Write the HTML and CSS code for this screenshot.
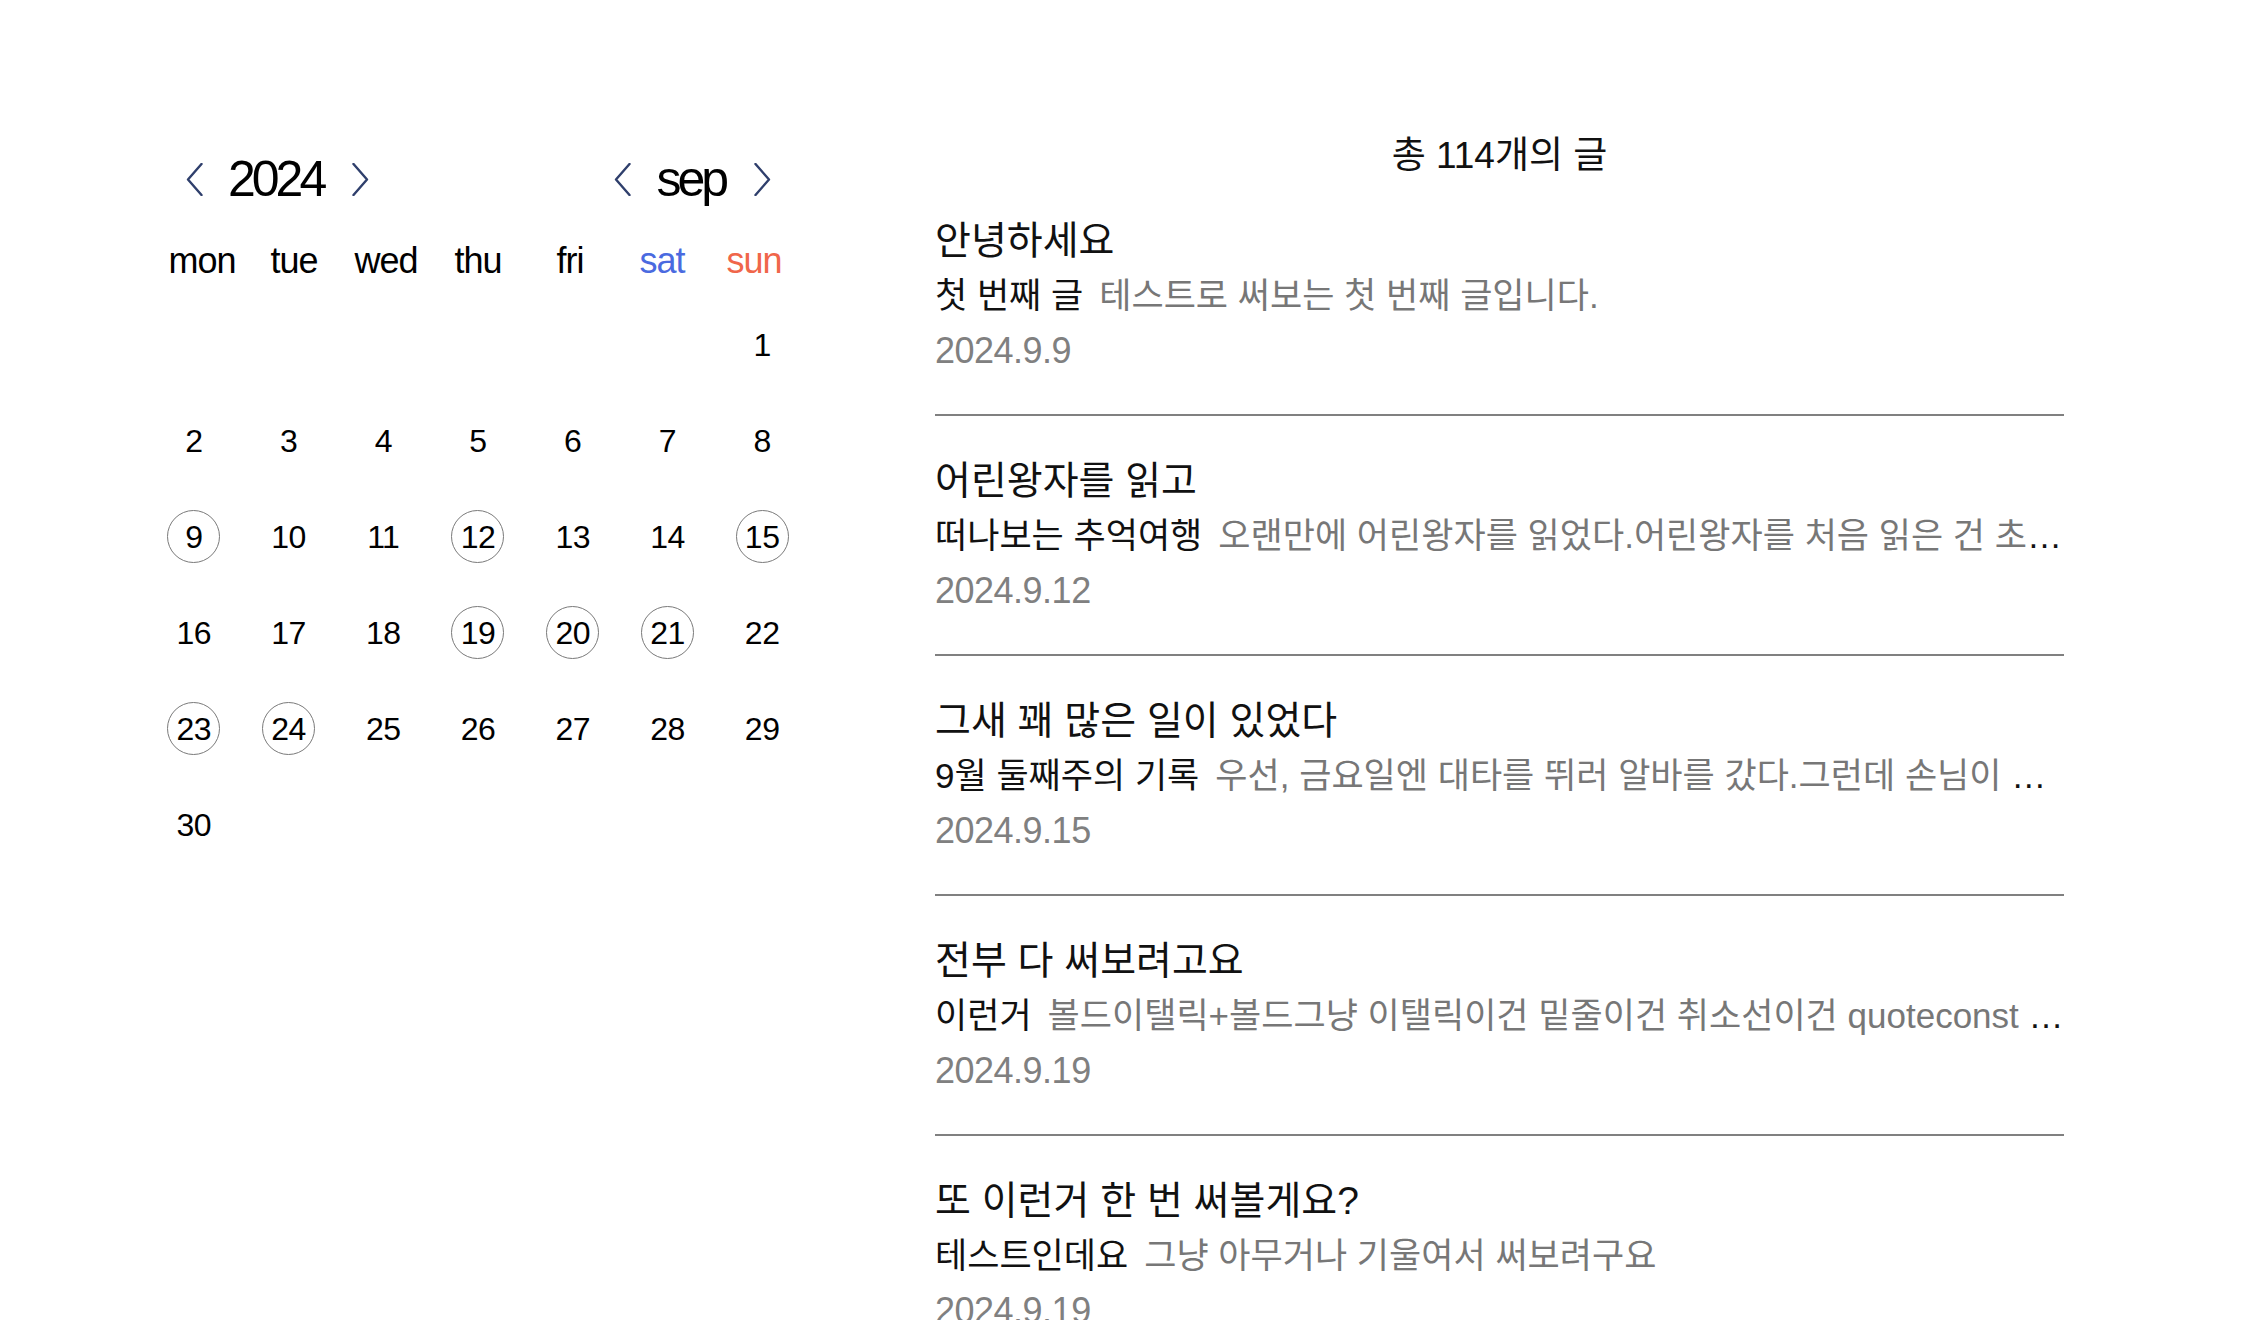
FILE: index.html
```html
<!DOCTYPE html>
<html lang="ko">
<head>
<meta charset="utf-8">
<title>calendar</title>
<link rel="stylesheet" href="styles.css">
</head>
<body>
<main class="page">
  <section class="calendar">
    <div class="cal-head">
      <div class="picker">
        <svg class="chev" viewBox="0 0 17 33" width="17" height="33"><polyline points="15.5,1 2,16.5 15.5,32"/></svg>
        <span class="picker-label">2024</span>
        <svg class="chev" viewBox="0 0 17 33" width="17" height="33"><polyline points="1.5,1 15,16.5 1.5,32"/></svg>
      </div>
      <div class="picker">
        <svg class="chev" viewBox="0 0 17 33" width="17" height="33"><polyline points="15.5,1 2,16.5 15.5,32"/></svg>
        <span class="picker-label">sep</span>
        <svg class="chev" viewBox="0 0 17 33" width="17" height="33"><polyline points="1.5,1 15,16.5 1.5,32"/></svg>
      </div>
    </div>
    <div class="weekdays">
      <span>mon</span><span>tue</span><span>wed</span><span>thu</span><span>fri</span><span class="sat">sat</span><span class="sun">sun</span>
    </div>
    <div class="days">
      <span class="day"></span><span class="day"></span><span class="day"></span><span class="day"></span><span class="day"></span><span class="day"></span><span class="day"><b>1</b></span>
      <span class="day"><b>2</b></span><span class="day"><b>3</b></span><span class="day"><b>4</b></span><span class="day"><b>5</b></span><span class="day"><b>6</b></span><span class="day"><b>7</b></span><span class="day"><b>8</b></span>
      <span class="day"><b class="mark">9</b></span><span class="day"><b>10</b></span><span class="day"><b>11</b></span><span class="day"><b class="mark">12</b></span><span class="day"><b>13</b></span><span class="day"><b>14</b></span><span class="day"><b class="mark">15</b></span>
      <span class="day"><b>16</b></span><span class="day"><b>17</b></span><span class="day"><b>18</b></span><span class="day"><b class="mark">19</b></span><span class="day"><b class="mark">20</b></span><span class="day"><b class="mark">21</b></span><span class="day"><b>22</b></span>
      <span class="day"><b class="mark">23</b></span><span class="day"><b class="mark">24</b></span><span class="day"><b>25</b></span><span class="day"><b>26</b></span><span class="day"><b>27</b></span><span class="day"><b>28</b></span><span class="day"><b>29</b></span>
      <span class="day"><b>30</b></span>
    </div>
  </section>

  <section class="posts">
    <h2 class="count">총 114개의 글</h2>
    <ul class="post-list">
      <li class="post">
        <p class="post-title">안녕하세요</p>
        <p class="post-line"><span class="post-sub">첫 번째 글</span><span class="post-excerpt">테스트로 써보는 첫 번째 글입니다.</span></p>
        <p class="post-date">2024.9.9</p>
      </li>
      <li class="post">
        <p class="post-title">어린왕자를 읽고</p>
        <p class="post-line"><span class="post-sub">떠나보는 추억여행</span><span class="post-excerpt">오랜만에 어린왕자를 읽었다.어린왕자를 처음 읽은 건 초등학교 때였던 것 같다.</span></p>
        <p class="post-date">2024.9.12</p>
      </li>
      <li class="post">
        <p class="post-title">그새 꽤 많은 일이 있었다</p>
        <p class="post-line"><span class="post-sub">9월 둘째주의 기록</span><span class="post-excerpt">우선, 금요일엔 대타를 뛰러 알바를 갔다.그런데 손님이 정말 많았다.</span></p>
        <p class="post-date">2024.9.15</p>
      </li>
      <li class="post">
        <p class="post-title">전부 다 써보려고요</p>
        <p class="post-line"><span class="post-sub">이런거</span><span class="post-excerpt">볼드이탤릭+볼드그냥 이탤릭이건 밑줄이건 취소선이건 quoteconst a = 1;</span></p>
        <p class="post-date">2024.9.19</p>
      </li>
      <li class="post">
        <p class="post-title">또 이런거 한 번 써볼게요?</p>
        <p class="post-line"><span class="post-sub">테스트인데요</span><span class="post-excerpt">그냥 아무거나 기울여서 써보려구요</span></p>
        <p class="post-date">2024.9.19</p>
      </li>
    </ul>
  </section>
</main>
</body>
</html>
```

FILE: styles.css
```css
* { box-sizing: border-box; }

html, body {
  margin: 0;
  padding: 0;
  background: #ffffff;
}

body {
  font-family: "Liberation Sans", "Noto Sans CJK KR", sans-serif;
  color: #111111;
  overflow: hidden;
}

.page {
  display: flex;
  align-items: flex-start;
}

/* ---------- calendar ---------- */
.calendar {
  width: 664px;
  margin-left: 146px;
  padding-top: 149px;
}

.cal-head {
  display: flex;
  justify-content: space-between;
  align-items: center;
  height: 60px;
  padding: 0 39px 0 40px;
}

.picker {
  display: flex;
  align-items: center;
  gap: 25px;
}

.picker-label {
  font-size: 50px;
  line-height: 60px;
  letter-spacing: -4px;
  color: #000;
  margin-right: 4px;
}

.chev {
  display: block;
  fill: none;
  stroke: #2f3f6c;
  stroke-width: 2.4;
  stroke-linecap: round;
  stroke-linejoin: round;
}

.weekdays {
  width: 644px;
  margin: 27px auto 0;
  display: grid;
  grid-template-columns: repeat(7, 1fr);
  font-size: 36px;
  line-height: 50px;
  letter-spacing: -1px;
  color: #000;
  text-align: center;
}

.weekdays .sat { color: #4a6ae0; }
.weekdays .sun { color: #f0664a; }

.days {
  width: 663px;
  margin: 10px auto 0;
  display: grid;
  grid-template-columns: repeat(7, 1fr);
  grid-auto-rows: 96px;
}

.day {
  display: flex;
  align-items: center;
  justify-content: center;
}

.day b {
  font-weight: 400;
  font-size: 32px;
  line-height: 55px;
  width: 53px;
  height: 53px;
  text-align: center;
  color: #000;
  letter-spacing: -0.5px;
}

.day b.mark {
  border: 1.5px solid #7a7a7a;
  border-radius: 50%;
  line-height: 52px;
}

/* ---------- posts ---------- */
.posts {
  width: 1129px;
  margin-left: 125px;
  padding-top: 136px;
}

.count {
  margin: 0;
  font-size: 37px;
  font-weight: 400;
  line-height: 40px;
  text-align: center;
  color: #111;
}

.post-list {
  list-style: none;
  margin: 0;
  padding: 0;
}

.post {
  padding: 37px 0 36px;
  border-bottom: 2px solid #808080;
}

.post p {
  margin: 0;
  line-height: 55px;
  height: 55px;
}

.post-title {
  font-size: 39px;
  color: #111;
}

.post-line {
  font-size: 35px;
  white-space: nowrap;
  overflow: hidden;
  text-overflow: ellipsis;
}

.post-sub {
  color: #111;
  margin-right: 16px;
}

.post-excerpt {
  color: #777777;
}

.post-date {
  font-size: 36px;
  letter-spacing: -0.5px;
  color: #808080;
}
```
